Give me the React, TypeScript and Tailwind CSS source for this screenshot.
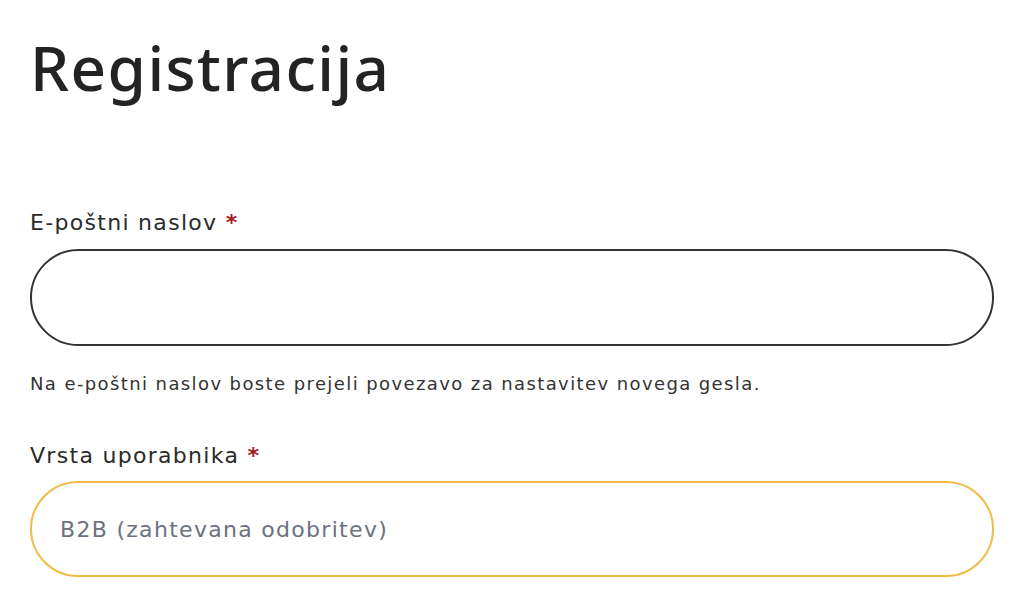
export default function App() {
  return (
    <div className="min-h-screen bg-white px-[30px] pt-[31px] font-['DejaVu_Sans',sans-serif] text-[#222]">
      <h1 className="font-['Noto_Sans',sans-serif] text-[62px] leading-[72px] font-medium tracking-[1.4px] text-[#232323]">
        Registracija
      </h1>

      <form className="mt-[105px] flex flex-col">
        <label className="text-[22px] leading-[30px] tracking-[1.3px] text-[#2a2a2a]">
          E-poštni naslov <span className="font-bold text-[#a32020]">*</span>
        </label>
        <input
          type="email"
          className="mt-[11px] h-[97px] w-full rounded-full border-2 border-[#333] bg-white px-[28px] text-[20px] outline-none"
        />
        <p className="mt-[26px] text-[18px] leading-[24px] tracking-[1.4px] text-[#333]">
          Na e-poštni naslov boste prejeli povezavo za nastavitev novega gesla.
        </p>

        <label className="mt-[45px] text-[22px] leading-[30px] tracking-[1.3px] text-[#2a2a2a]">
          Vrsta uporabnika <span className="font-bold text-[#a32020]">*</span>
        </label>
        <div className="mt-[10px] flex h-[96px] w-full items-center rounded-full border-2 border-[#f0bb48] bg-white px-[28px]">
          <span className="text-[22px] tracking-[1.3px] text-[#6b7280]">B2B (zahtevana odobritev)</span>
        </div>

        <label className="mt-[36px] text-[22px] leading-[30px] tracking-[1.3px] text-[#2a2a2a]">
          Ime <span className="font-bold text-[#a32020]">*</span>
        </label>
      </form>
    </div>
  );
}
